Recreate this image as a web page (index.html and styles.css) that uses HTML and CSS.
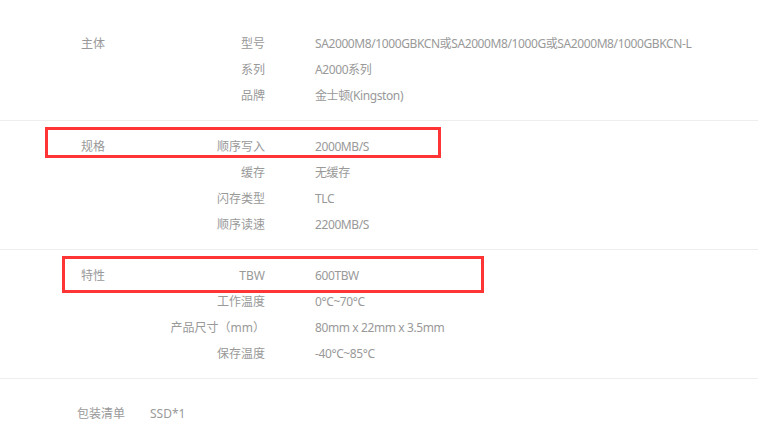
FILE: index.html
```html
<!DOCTYPE html>
<html lang="zh">
<head>
    <meta charset="UTF-8">
    <meta name="viewport" content="width=device-width, initial-scale=1.0">
    <title>规格参数</title>
    <link rel="stylesheet" href="styles.css">
</head>
<body>
    <div class="params">
        <div class="group first">
            <div class="group-name">主体</div>
            <dl class="items">
                <dt>型号</dt><dd>SA2000M8/1000GBKCN或SA2000M8/1000G或SA2000M8/1000GBKCN-L</dd>
                <dt>系列</dt><dd>A2000系列</dd>
                <dt>品牌</dt><dd>金士顿(Kingston)</dd>
            </dl>
        </div>
        <div class="group">
            <div class="group-name">规格</div>
            <dl class="items">
                <dt>顺序写入</dt><dd>2000MB/S</dd>
                <dt>缓存</dt><dd>无缓存</dd>
                <dt>闪存类型</dt><dd>TLC</dd>
                <dt>顺序读速</dt><dd>2200MB/S</dd>
            </dl>
        </div>
        <div class="group">
            <div class="group-name">特性</div>
            <dl class="items">
                <dt>TBW</dt><dd>600TBW</dd>
                <dt>工作温度</dt><dd>0°C~70°C</dd>
                <dt>产品尺寸（mm）</dt><dd>80mm x 22mm x 3.5mm</dd>
                <dt>保存温度</dt><dd>-40°C~85°C</dd>
            </dl>
        </div>
        <div class="package">
            <span class="package-name">包装清单</span>
            <span>SSD*1</span>
        </div>
    </div>

    <!-- 标注框 -->
    <div class="mark mark1"></div>
    <div class="mark mark2"></div>
</body>
</html>
```

FILE: styles.css
```css
body {
    margin: 0;
    font-family: "Noto Sans", "Noto Sans CJK SC", sans-serif;
    font-size: 12px;
    color: #999;
    background-color: #fff;
}

.group {
    display: flex;
    padding: 12px 0;
    border-bottom: 1px solid #eee;
}

.group.first {
    padding-top: 30px;
}

.group-name {
    width: 81px;
    padding: 2px 0 0 81px;
    line-height: 24px;
    box-sizing: content-box;
    flex-shrink: 0;
}

.items {
    display: grid;
    grid-template-columns: 103px auto;
    column-gap: 50px;
    margin: 0;
}

.items dt,
.items dd {
    padding-top: 2px;
    line-height: 24px;
}

.items dt {
    text-align: right;
}

.items dd {
    margin: 0;
    letter-spacing: -0.4px;
}

.package {
    display: flex;
    gap: 25px;
    padding: 22px 0 0 77px;
    line-height: 26px;
}

.mark {
    position: absolute;
    border: 3px solid #ff3434;
    box-sizing: border-box;
}

.mark1 {
    left: 45px;
    top: 127px;
    width: 396px;
    height: 31px;
}

.mark2 {
    left: 62px;
    top: 256px;
    width: 422px;
    height: 37px;
}
```
